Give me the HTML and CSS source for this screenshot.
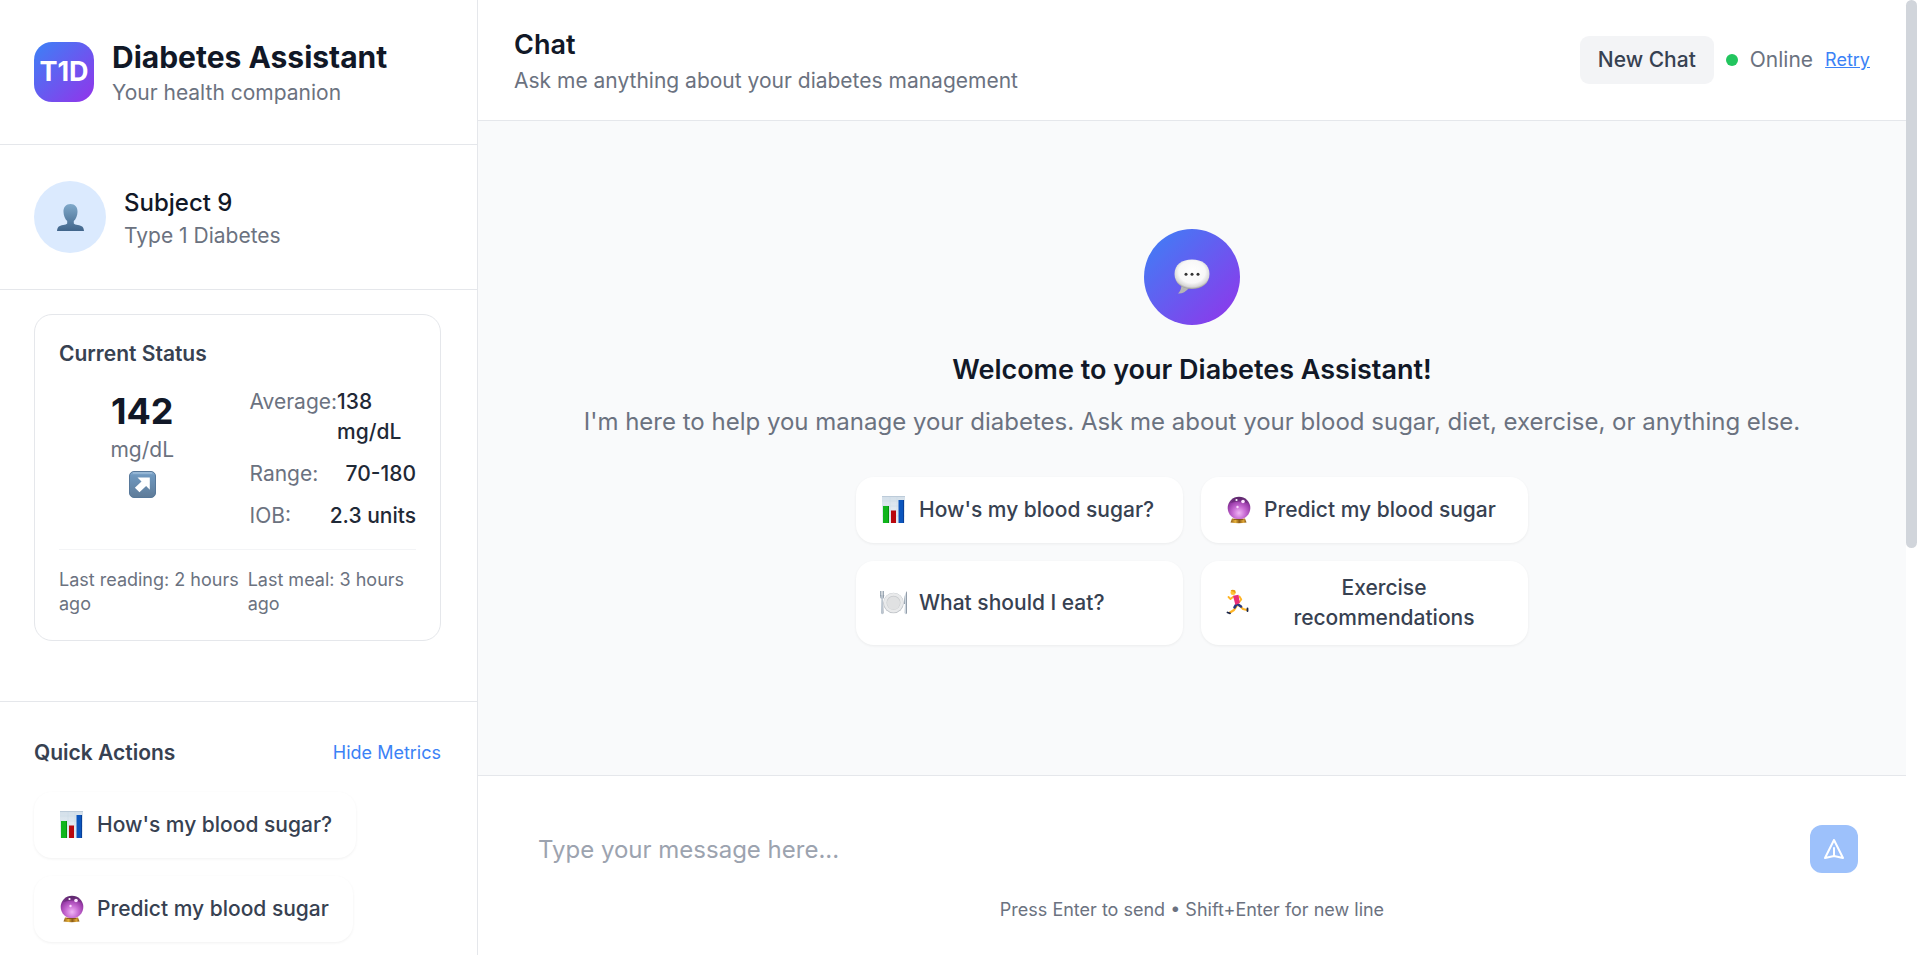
FILE: index.html
```html
<!DOCTYPE html>
<html lang="en">
<head>
<meta charset="utf-8">
<title>Diabetes Assistant</title>
<meta name="viewport" content="width=device-width, initial-scale=1">
<link rel="stylesheet" href="styles.css">
</head>
<body>
<svg class="sprite" aria-hidden="true">
  <defs>
    <linearGradient id="g-person" x1="0" y1="0" x2="0" y2="1"><stop offset="0" stop-color="#7fa9ca"/><stop offset="1" stop-color="#41658b"/></linearGradient>
    <linearGradient id="g-key" x1="0" y1="0" x2="0" y2="1"><stop offset="0" stop-color="#8fb2d3"/><stop offset=".15" stop-color="#6f98bf"/><stop offset="1" stop-color="#5e7b98"/></linearGradient>
    <linearGradient id="g-paper" x1="0" y1="0" x2="0" y2="1"><stop offset="0" stop-color="#d3dfe9"/><stop offset=".4" stop-color="#dfe8f0"/><stop offset="1" stop-color="#ecf1f6"/></linearGradient>
    <radialGradient id="g-ball" cx=".5" cy=".72" r=".72"><stop offset="0" stop-color="#f0b5f5"/><stop offset=".4" stop-color="#c76ad2"/><stop offset=".75" stop-color="#983aa8"/><stop offset="1" stop-color="#542563"/></radialGradient>
    <linearGradient id="g-gold" x1="0" y1="0" x2="1" y2="0"><stop offset="0" stop-color="#8d5a16"/><stop offset=".3" stop-color="#e8b43c"/><stop offset=".55" stop-color="#8a5b17"/><stop offset=".8" stop-color="#e2a936"/><stop offset="1" stop-color="#7a4d12"/></linearGradient>
    <radialGradient id="g-bubble" cx=".5" cy=".42" r=".58"><stop offset="0" stop-color="#fff"/><stop offset=".65" stop-color="#f8f8f8"/><stop offset=".88" stop-color="#d8d8d8"/><stop offset="1" stop-color="#9c9c9c"/></radialGradient>
    <linearGradient id="g-steel" x1="0" y1="0" x2="1" y2="0"><stop offset="0" stop-color="#7e8b99"/><stop offset=".5" stop-color="#cdd6df"/><stop offset="1" stop-color="#74808e"/></linearGradient>
  </defs>
  <symbol id="i-chart" viewBox="0 0 27 30">
    <path fill="url(#g-paper)" d="M2 1h23v27H2z"/>
    <path stroke="#cbd8e4" stroke-width=".5" d="M2 6h23M2 11h23M2 16h23M2 21h23M10 1v27M17 1v27"/>
    <path fill="#bccbd9" d="M2 1h23v1H2z"/>
    <path fill="#10b51c" d="M3 11h6v17H3z"/><path fill="#b9080e" d="M11 15.500h5V28h-5z"/><path fill="#0b55bd" d="M18.500 5H24v23h-5.500z"/>
    <path fill="#05920e" d="M8 11h1v17H8z"/><path fill="#083f98" d="M23 5h1v23h-1z"/>
  </symbol>
  <symbol id="i-ball" viewBox="0 0 27 30">
    <path fill="url(#g-gold)" d="M7 23.500h13l1.500 4q-8 1.600-16 0z"/>
    <circle cx="14" cy="13" r="11.300" fill="url(#g-ball)"/>
    <path d="M5.500 8Q14-2 22.500 8q-8-3-17 0z" fill="#4b2358" opacity=".45"/>
    <circle cx="11.500" cy="5" r="1.100" fill="#fff"/><circle cx="18" cy="6.500" r="1.800" fill="#fce3ff"/><circle cx="12.500" cy="12" r="1.200" fill="#f9d9fd"/>
    <path fill="#7b4b16" d="M8.500 24h10v.8h-10z"/>
  </symbol>
  <symbol id="i-plate" viewBox="0 0 27 30">
    <circle cx="13.500" cy="15" r="10.300" fill="#bfc3c8"/><circle cx="13.500" cy="14.700" r="9.700" fill="#e9eaeb"/><circle cx="13.500" cy="14.700" r="7" fill="#c6c9cc"/><circle cx="13.500" cy="15.100" r="6.500" fill="#e0e1e2"/>
    <path fill="none" stroke="#8795a3" stroke-width=".8" d="M.5 3v5M2 3v5M3.500 3v5"/>
    <path fill="url(#g-steel)" d="M0 7h4.200q0 3-1.300 4l.7 14q-1.300 2.500-2.600 0l.4-14Q0 10 0 7z"/>
    <path fill="url(#g-steel)" d="M27 3q-3 3-3 13h1l-.3 9q1 2.500 2.300 0z"/>
  </symbol>
  <symbol id="i-run" viewBox="0 0 27 30">
    <g fill="none" stroke-linecap="round" stroke-linejoin="round">
      <path stroke="#ffb526" stroke-width="2.200" d="M12 17.500l-3 4.500-4 2.500M14 17l4 4 4 1"/>
      <path stroke="#ffb526" stroke-width="1.800" d="M8 9l-2.500 2L3.500 9M14.500 8.500l1.800 3-2 2.500"/>
      <path stroke="#26377f" stroke-width="2.600" d="M11 17l-1.500 2.500M13 16.500l3 2"/>
      <path stroke="#1b2548" stroke-width="1.800" d="M2.500 24.500l2.500.8M22.500 20.500v2.500"/>
    </g>
    <circle cx="8" cy="4.500" r="2.500" fill="#ffc437"/><path fill="#e79a13" d="M5.500 2.800q2-2.200 4.800-.2l.3 2.800-2-1.600z"/>
    <path fill="#e92e76" d="M8 7.700l5.500-1 1.300 8.200-4.400 2z"/>
  </symbol>
</svg>

<div class="app">
  <aside class="sidebar">
    <header class="brand">
      <div class="logo">T1D</div>
      <div>
        <h1 class="brand-name">Diabetes Assistant</h1>
        <p class="muted">Your health companion</p>
      </div>
    </header>

    <section class="profile">
      <div class="avatar">
        <svg width="27" height="27" viewBox="0 0 27 27" aria-hidden="true"><path fill="url(#g-person)" d="M13.500 0C9 0 6.300 3 6.500 8c.1 4 1.700 7.200 3.700 9v2.500c-1 1.500-7 1.500-8.700 3.300C.4 24 .2 25.500 0 27h27c-.2-1.500-.4-3-1.500-4.200-1.700-1.800-7.700-1.800-8.700-3.300V17c2-1.800 3.600-5 3.700-9 .2-5-2.500-8-7-8z"/></svg>
      </div>
      <div>
        <h2 class="profile-name">Subject 9</h2>
        <p class="muted">Type 1 Diabetes</p>
      </div>
    </section>

    <section class="metrics">
      <div class="status-card">
        <h3 class="section-title">Current Status</h3>
        <div class="status-grid">
          <div class="glucose">
            <div class="glucose-value">142</div>
            <div class="muted">mg/dL</div>
            <div class="trend">
              <svg width="27" height="27" viewBox="0 0 27 27" role="img" aria-label="Rising"><rect x=".5" y=".5" width="26" height="26" rx="4.500" fill="url(#g-key)" stroke="#57789a"/><path fill="none" stroke="#a9c5df" stroke-width="1" d="M4 2h19"/><path fill="#fff" d="M8.500 6.500h12.300v12.300l-3.700-3.700-6.600 6.200-4.600-4.600 6.600-6.200z"/></svg>
            </div>
          </div>
          <dl class="stats">
            <div class="stat"><dt>Average:</dt><dd>138 mg/dL</dd></div>
            <div class="stat"><dt>Range:</dt><dd>70-180</dd></div>
            <div class="stat"><dt>IOB:</dt><dd>2.3 units</dd></div>
          </dl>
        </div>
        <div class="status-foot"><span>Last reading: 2 hours ago</span><span>Last meal: 3 hours ago</span></div>
      </div>
    </section>

    <section class="quick">
      <div class="quick-head">
        <h3 class="section-title">Quick Actions</h3>
        <button type="button" class="text-button">Hide Metrics</button>
      </div>
      <div class="quick-list">
        <button type="button" class="action"><svg class="emoji" aria-hidden="true"><use href="#i-chart"/></svg><span>How's my blood sugar?</span></button>
        <button type="button" class="action"><svg class="emoji" aria-hidden="true"><use href="#i-ball"/></svg><span>Predict my blood sugar</span></button>
      </div>
    </section>
  </aside>

  <main class="chat">
    <header class="chat-head">
      <div>
        <h2 class="chat-title">Chat</h2>
        <p class="muted">Ask me anything about your diabetes management</p>
      </div>
      <div class="chat-tools">
        <button type="button" class="new-chat">New Chat</button>
        <span class="dot"></span>
        <span class="muted">Online</span>
        <button type="button" class="text-button underlined">Retry</button>
      </div>
    </header>

    <section class="welcome">
      <div class="welcome-icon">
        <svg width="36" height="36" viewBox="0 0 36 36" aria-hidden="true"><path fill="#b5b5b5" d="M7.500 26q0 5-3.500 8.500 6 .5 11-5.500z"/><path fill="url(#g-bubble)" d="M18 .5C28 .5 35.500 5.500 35.500 15S28 30 18 30 .5 24.500.5 15 8 .5 18 .5z"/><g fill="#333"><circle cx="12" cy="15.300" r="1.500"/><circle cx="18" cy="15.300" r="1.500"/><circle cx="24" cy="15.300" r="1.500"/></g></svg>
      </div>
      <h2 class="welcome-title">Welcome to your Diabetes Assistant!</h2>
      <p class="welcome-text">I'm here to help you manage your diabetes. Ask me about your blood sugar, diet, exercise, or anything else.</p>
      <div class="suggestions">
        <button type="button" class="action"><svg class="emoji" aria-hidden="true"><use href="#i-chart"/></svg><span>How's my blood sugar?</span></button>
        <button type="button" class="action"><svg class="emoji" aria-hidden="true"><use href="#i-ball"/></svg><span>Predict my blood sugar</span></button>
        <button type="button" class="action"><svg class="emoji" aria-hidden="true"><use href="#i-plate"/></svg><span>What should I eat?</span></button>
        <button type="button" class="action"><svg class="emoji" aria-hidden="true"><use href="#i-run"/></svg><span>Exercise recommendations</span></button>
      </div>
    </section>

    <form class="composer">
      <div class="composer-row">
        <input class="message" type="text" aria-label="Message" placeholder="Type your message here...">
        <button type="button" class="send" aria-label="Send message" disabled>
          <svg width="24" height="24" viewBox="0 0 24 24" fill="none" stroke="#fff" stroke-width="2" stroke-linecap="round" stroke-linejoin="round" aria-hidden="true"><path d="M12 19l9 2-9-18-9 18 9-2zm0 0v-8"/></svg>
        </button>
      </div>
      <p class="hint">Press Enter to send • Shift+Enter for new line</p>
    </form>
  </main>
  <div class="scroll-track" aria-hidden="true"><div class="scroll-thumb"></div></div>
</div>
</body>
</html>
```
FILE: styles.css
```css
* { box-sizing: border-box; margin: 0; }

body {
  font: 400 21px/30px Inter, "Liberation Sans", sans-serif;
  color: #111827;
  background: #fff;
}

button { font: inherit; border: 0; cursor: pointer; }

.sprite { position: absolute; width: 0; height: 0; }

.app {
  display: grid;
  grid-template-columns: 478px minmax(0, 1fr) 11px;
  height: 100vh;
  overflow: hidden;
}

.muted { color: #6b7280; }

/* Sidebar */
.sidebar { border-right: 1px solid #e5e7eb; overflow: hidden; }

.brand, .profile {
  display: flex;
  align-items: center;
  gap: 18px;
  padding: 36px 36px 36px 34px;
  border-bottom: 1px solid #e5e7eb;
}

.logo {
  display: grid;
  place-items: center;
  width: 60px;
  height: 60px;
  border-radius: 18px;
  background: linear-gradient(135deg, #3b82f6, #9333ea);
  color: #fff;
  font-size: 27px;
  font-weight: 700;
}

.brand-name { font-size: 30px; line-height: 42px; font-weight: 700; }

.avatar {
  display: grid;
  place-items: center;
  width: 72px;
  height: 72px;
  border-radius: 50%;
  background: #dbeafe;
}

.profile-name { font-size: 24px; line-height: 37px; font-weight: 500; }

.metrics { padding: 24px 36px 60px 34px; }

.status-card {
  padding: 24px;
  border: 1px solid #e5e7eb;
  border-radius: 18px;
}

.section-title { font-size: 21px; line-height: 30px; font-weight: 600; color: #374151; }

.status-grid {
  display: grid;
  grid-template-columns: 1fr 1fr;
  gap: 24px;
  margin-top: 18px;
}

.glucose { text-align: center; }
.glucose-value { font-size: 36px; line-height: 48px; font-weight: 700; }
.trend { display: grid; place-items: center; height: 38px; }

.stats { display: grid; gap: 12px; }
.stat { display: flex; justify-content: space-between; }
.stat dt { color: #6b7280; }
.stat dd { font-weight: 500; color: #1f2937; }

.status-foot {
  display: flex;
  justify-content: space-between;
  margin-top: 18px;
  padding-top: 18px;
  border-top: 1px solid #f3f4f6;
  font-size: 18px;
  line-height: 24px;
  color: #6b7280;
}

.quick { padding: 36px 36px 36px 34px; border-top: 1px solid #e5e7eb; }
.quick-head { display: flex; justify-content: space-between; align-items: center; margin-bottom: 24px; }
.quick-list { display: flex; flex-direction: column; align-items: flex-start; gap: 18px; }

.text-button {
  padding: 0;
  background: none;
  color: #3b82f6;
  font-size: 18px;
  line-height: 24px;
}
.underlined { text-decoration: underline; }

.action {
  display: flex;
  align-items: center;
  gap: 12px;
  min-height: 66px;
  padding: 12px 24px;
  border-radius: 18px;
  background: #fff;
  box-shadow: 0 1px 3px rgba(0, 0, 0, 0.06);
  color: #374151;
  font-weight: 500;
}
.action span { flex: 1; text-align: center; }
.emoji { flex: none; width: 27px; height: 30px; }

/* Chat */
.chat { display: flex; flex-direction: column; min-width: 0; }

.chat-head {
  display: flex;
  justify-content: space-between;
  align-items: center;
  padding: 24px 36px;
  border-bottom: 1px solid #e5e7eb;
}
.chat-title { font-size: 27px; line-height: 42px; font-weight: 600; }
.chat-tools { display: flex; align-items: center; gap: 12px; }

.new-chat {
  padding: 9px 18px;
  border-radius: 9px;
  background: #f3f4f6;
  color: #374151;
  font-weight: 500;
}
.dot { width: 12px; height: 12px; border-radius: 50%; background: #22c55e; }

.welcome {
  flex: 1;
  display: flex;
  flex-direction: column;
  align-items: center;
  justify-content: center;
  padding: 0 36px 22px;
  background: #f9fafb;
  text-align: center;
}
.welcome-icon {
  display: grid;
  place-items: center;
  width: 96px;
  height: 96px;
  border-radius: 50%;
  background: linear-gradient(135deg, #3b82f6, #9333ea);
}
.welcome-title { margin-top: 24px; font-size: 27px; line-height: 42px; font-weight: 600; }
.welcome-text { margin-top: 12px; font-size: 24px; line-height: 38px; color: #6b7280; }

.suggestions {
  display: grid;
  grid-template-columns: 1fr 1fr;
  gap: 18px;
  width: 100%;
  max-width: 672px;
  margin-top: 36px;
}
.suggestions .action span { flex: 0 1 auto; }
.suggestions .action:last-child span { flex: 1; }

.composer { padding: 36px 36px 33px; border-top: 1px solid #e5e7eb; }
.composer-row { display: flex; align-items: center; padding: 0 12px 0 0; }
.message {
  flex: 1;
  min-width: 0;
  height: 74px;
  padding: 0 24px;
  border: 0;
  outline: 0;
  background: none;
  color: #111827;
  font: inherit;
  font-size: 24px;
}
.message::placeholder { color: #9ca3af; opacity: 1; }

.send {
  display: grid;
  place-items: center;
  width: 48px;
  height: 48px;
  padding: 0;
  border-radius: 12px;
  background: #9dc1fb;
}

.hint { margin-top: 12px; font-size: 18px; line-height: 24px; text-align: center; color: #6b7280; }

.scroll-track { background: #fff; }
.scroll-thumb { height: 57.4%; border-radius: 6px; background: #d1d5db; }
```
